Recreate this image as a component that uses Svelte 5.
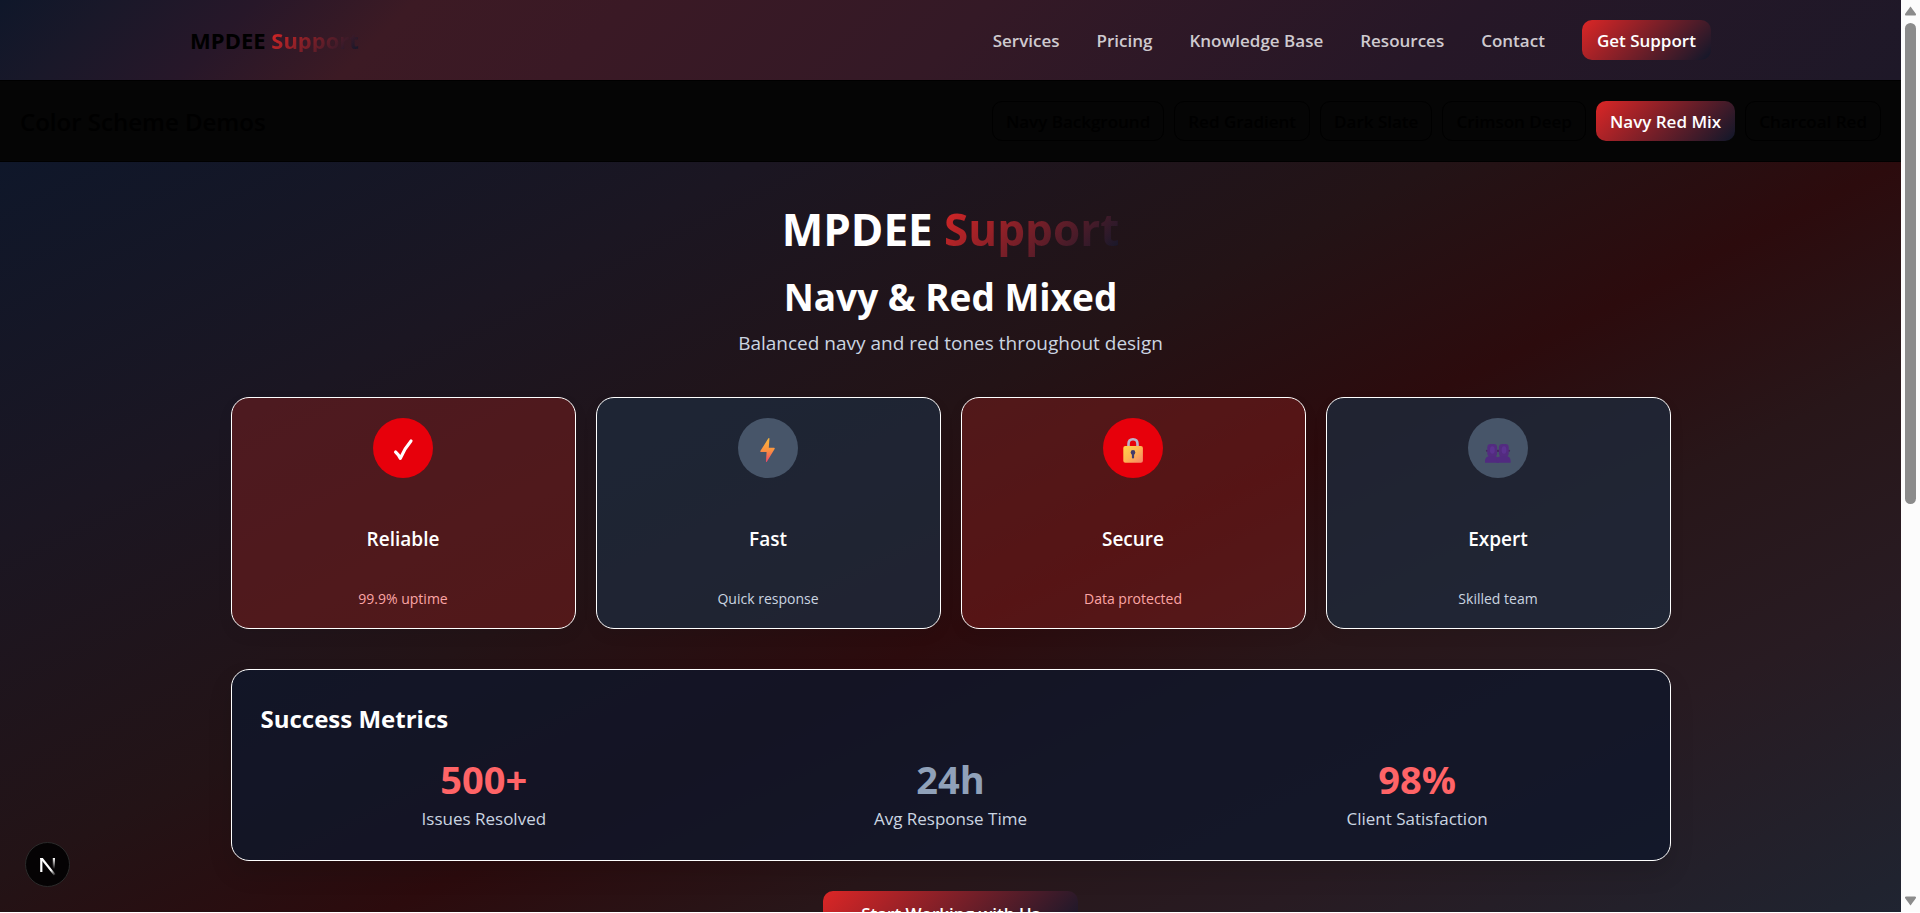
<script>
  const links = ['Services', 'Pricing', 'Knowledge Base', 'Resources', 'Contact'];
  const schemes = ['Navy Background', 'Red Gradient', 'Dark Slate', 'Crimson Deep', 'Navy Red Mix', 'Charcoal Red'];
  let active = $state('Navy Red Mix');

  const features = [
    { icon: 'check', title: 'Reliable', text: '99.9% uptime', tone: 'red' },
    { icon: 'bolt', title: 'Fast', text: 'Quick response', tone: 'navy' },
    { icon: 'lock', title: 'Secure', text: 'Data protected', tone: 'red' },
    { icon: 'people', title: 'Expert', text: 'Skilled team', tone: 'navy' }
  ];

  const metrics = [
    { value: '500+', label: 'Issues Resolved', tone: 'red' },
    { value: '24h', label: 'Avg Response Time', tone: 'slate' },
    { value: '98%', label: 'Client Satisfaction', tone: 'red' }
  ];
</script>

<div class="window">
  <div class="page">
    <header class="top">
      <a class="logo" href="#home">MPDEE <span class="fade">Support</span></a>
      <nav>
        {#each links as link}
          <a href="#{link}">{link}</a>
        {/each}
        <button class="cta">Get Support</button>
      </nav>
    </header>

    <div class="demos">
      <h2>Color Scheme Demos</h2>
      <div class="tabs">
        {#each schemes as scheme}
          <button class:active={scheme === active} onclick={() => (active = scheme)}>{scheme}</button>
        {/each}
      </div>
    </div>

    <main>
      <h1>MPDEE <span class="fade">Support</span></h1>
      <h2 class="scheme">Navy &amp; Red Mixed</h2>
      <p class="lead">Balanced navy and red tones throughout design</p>

      <section class="cards">
        {#each features as f}
          <article class={f.tone}>
            <div class="circle">
              <svg viewBox="0 0 60 60" width="60" height="60" aria-hidden="true">
                {#if f.icon === 'check'}
                  <path d="M22.6 34 Q25.4 36.4 27.3 40.4 Q31.4 30.6 38 23" fill="none" stroke="#fff" stroke-width="3.2" stroke-linecap="round" stroke-linejoin="round" />
                {:else if f.icon === 'bolt'}
                  <defs>
                    <linearGradient id="bolt" x1="0" y1="0" x2="0" y2="1">
                      <stop offset="0" stop-color="#f9b73e" />
                      <stop offset="0.5" stop-color="#fb923f" />
                      <stop offset="1" stop-color="#ee4668" />
                    </linearGradient>
                  </defs>
                  <path d="M30.2 20.4 Q31.6 19.4 31.4 21 L30.8 29.8 H36 Q37.2 29.8 36.6 31 L29 43.6 Q28 44.8 28 43.2 L28.6 34 H23.2 Q22 34 22.5 32.8 Z" fill="url(#bolt)" />
                {:else if f.icon === 'lock'}
                  <defs>
                    <linearGradient id="lock" x1="0" y1="0" x2="1" y2="1">
                      <stop offset="0" stop-color="#ffd34a" />
                      <stop offset="0.5" stop-color="#fdb452" />
                      <stop offset="1" stop-color="#f6826a" />
                    </linearGradient>
                  </defs>
                  <path d="M25.5 30 V26 Q25.5 21.3 30 21.3 Q34.5 21.3 34.5 26 V30" fill="none" stroke="#b9b2c9" stroke-width="2.6" />
                  <rect x="20.3" y="28" width="19.6" height="16.8" rx="2" fill="url(#lock)" />
                  <circle cx="30" cy="34.4" r="2.3" fill="#433b6b" />
                  <rect x="28.9" y="34.6" width="2.2" height="6" rx="1.1" fill="#433b6b" />
                {:else}
                  {#each [0, 11.6] as dx}
                    <g transform="translate({dx} 0)">
                      <path d="M17 44.8 V43 Q17.2 38.4 21.6 38 H26.6 Q31 38.4 31 43 V44.8 Z" fill="#512a80" />
                      <circle cx="19" cy="32.8" r="1.1" fill="#46285f" />
                      <circle cx="29.4" cy="32.8" r="1.1" fill="#46285f" />
                      <rect x="19.3" y="26" width="9.8" height="12.6" rx="3.4" fill="#532b80" />
                      <ellipse cx="24.4" cy="32" rx="2.4" ry="3.8" fill="#5c3290" />
                    </g>
                  {/each}
                {/if}
              </svg>
            </div>
            <h3>{f.title}</h3>
            <p>{f.text}</p>
          </article>
        {/each}
      </section>

      <section class="metrics">
        <h2>Success Metrics</h2>
        <div class="grid">
          {#each metrics as m}
            <div class="metric">
              <strong class={m.tone}>{m.value}</strong>
              <span>{m.label}</span>
            </div>
          {/each}
        </div>
      </section>

      <button class="cta start">Start Working with Us</button>
    </main>
  </div>

  <div class="scroll" aria-hidden="true">
    <svg width="13" height="10" viewBox="0 0 13 10"><path d="M6.5 0.5 L12 8 Q12.4 9.5 11 9.5 H2 Q0.6 9.5 1 8 Z" fill="#8b8b8b" /></svg>
    <div class="track"><div class="thumb"></div></div>
    <svg width="13" height="10" viewBox="0 0 13 10"><path d="M6.5 9.5 L12 2 Q12.4 0.5 11 0.5 H2 Q0.6 0.5 1 2 Z" fill="#8b8b8b" /></svg>
  </div>

  <button class="badge" aria-label="Open developer tools">
    <svg width="44" height="44" viewBox="0 0 44 44" aria-hidden="true">
      <defs>
        <linearGradient id="stem" x1="0" y1="0" x2="0" y2="1">
          <stop offset="0" stop-color="#fff" />
          <stop offset="1" stop-color="#fff" stop-opacity="0" />
        </linearGradient>
        <linearGradient id="diag" x1="0" y1="0" x2="1" y2="1">
          <stop offset="0.7" stop-color="#fff" />
          <stop offset="1" stop-color="#fff" stop-opacity="0" />
        </linearGradient>
      </defs>
      <rect x="14.2" y="15" width="2.2" height="14" fill="#fff" />
      <path d="M14.2 15 H16.8 L29.6 31.2 L27.9 32.4 L14.2 15.6 Z" fill="url(#diag)" />
      <rect x="26.8" y="15" width="2.2" height="11" fill="url(#stem)" />
    </svg>
  </button>
</div>

<style>
  :global(body) {
    background: #fff;
  }

  .window {
    display: flex;
    height: calc(100vh - 1px);
    overflow: hidden;
    font-family: 'Open Sans', 'Noto Sans', sans-serif;
    font-size: 17px;
    line-height: 24px;
    color: #fff;
  }

  .page {
    flex: 1;
    min-width: 0;
    overflow: hidden;
    display: flex;
    flex-direction: column;
  }

  h1, h2, h3, p {
    margin: 0;
  }

  a {
    color: inherit;
    text-decoration: none;
  }

  button {
    font: inherit;
    font-weight: 600;
    cursor: pointer;
  }

  .top {
    display: flex;
    align-items: center;
    justify-content: space-between;
    flex: none;
    height: 80px;
    padding: 0 10%;
    border-bottom: 1px solid #000;
    background: linear-gradient(135deg, #0f172a 0%, #1a1829 6%, #271729 13%, #3c1a24 21%, #3a1925 32%, #341926 50%, #261727 75%, #1e1828 100%);
  }

  .logo {
    color: #000;
    font-size: 22px;
    font-weight: 700;
  }

  .fade {
    display: inline-block;
    background: linear-gradient(135deg, #dc2626, #0f172a);
    background-clip: text;
    -webkit-background-clip: text;
    color: transparent;
  }

  nav {
    display: flex;
    align-items: center;
    gap: 37px;
    color: #cfcacf;
    font-weight: 600;
  }

  nav a {
    padding-top: 2px;
  }

  .cta {
    padding: 9px 15px 7px;
    border: 0;
    border-radius: 10px;
    background: linear-gradient(135deg, #dc2626, #0f172a);
    color: #fff;
  }

  .demos {
    display: flex;
    align-items: center;
    justify-content: space-between;
    flex: none;
    padding: 20px;
    border-bottom: 1px solid #000;
    background: #050505;
    color: #000;
  }

  .demos h2 {
    padding-top: 2px;
    font-size: 24px;
    font-weight: 600;
  }

  .tabs {
    display: flex;
    gap: 10px;
  }

  .tabs button {
    padding: 8px 13px 6px;
    border: 1px solid #000;
    border-radius: 10px;
    background: transparent;
    color: #000;
  }

  .tabs .active {
    padding: 9px 14px 7px;
    border: 0;
    background: linear-gradient(135deg, #dc2626, #0f172a);
    color: #fff;
  }

  main {
    display: flex;
    flex-direction: column;
    align-items: center;
    flex: none;
    min-height: 940px;
    box-sizing: border-box;
    padding: 39px 20px;
    background: linear-gradient(to bottom right, #0f172a, #1b1622 20%, #231316 38%, #2c0b0d 50%, #281619 61%, #281b22 73%, #20232f 88%, #1e293b);
  }

  h1 {
    font-size: 44px;
    line-height: 56px;
    font-weight: 700;
  }

  .scheme {
    margin-top: 16px;
    font-size: 37px;
    line-height: 48px;
    font-weight: 700;
  }

  .lead {
    margin-top: 8px;
    font-size: 19px;
    line-height: 28px;
    color: #cbd5e1;
  }

  .cards,
  .metrics {
    width: 100%;
    max-width: 1440px;
    box-sizing: border-box;
  }

  .cards {
    display: grid;
    grid-template-columns: repeat(4, 1fr);
    gap: 20px;
    margin-top: 40px;
  }

  article {
    display: flex;
    flex-direction: column;
    align-items: center;
    padding: 20px 20px 19px;
    border: 1px solid #fff;
    border-radius: 18px;
    box-shadow: 0 6px 16px rgba(0, 0, 0, 0.06);
  }

  article.red {
    background: rgba(127, 29, 29, 0.5);
  }

  article.navy {
    background: rgba(30, 41, 59, 0.8);
  }

  .circle {
    width: 60px;
    height: 60px;
    border-radius: 50%;
    background: #475569;
  }

  .red .circle {
    background: #e7000b;
  }

  .circle svg {
    display: block;
  }

  h3 {
    margin-top: 47px;
    font-size: 19px;
    line-height: 28px;
    font-weight: 600;
  }

  article p {
    margin-top: 36px;
    font-size: 14px;
    line-height: 20px;
    color: #cbd5e1;
  }

  article.red p {
    color: #fca5a5;
  }

  .metrics {
    margin-top: 40px;
    padding: 31px 29px 27px;
    border: 1px solid #fff;
    border-radius: 18px;
    background: rgba(15, 23, 42, 0.8);
    box-shadow: 0 12px 24px rgba(0, 0, 0, 0.12);
  }

  .metrics h2 {
    font-size: 24px;
    line-height: 36px;
    font-weight: 700;
  }

  .grid {
    display: grid;
    grid-template-columns: repeat(3, 1fr);
    gap: 20px;
    margin-top: 18px;
  }

  .metric {
    display: flex;
    flex-direction: column;
    align-items: center;
    gap: 2px;
    color: #cbd5e1;
  }

  .metric strong {
    font-size: 38px;
    line-height: 48px;
    font-weight: 700;
  }

  .metric span {
    line-height: 28px;
  }

  .metric .red {
    color: #ff6467;
  }

  .metric .slate {
    color: #90a1b9;
  }

  .start {
    margin-top: 30px;
    padding: 11px 38px;
  }

  .scroll {
    display: flex;
    flex-direction: column;
    align-items: center;
    width: 19px;
    padding: 6px 0;
    box-sizing: border-box;
    background: #fcfcfc;
  }

  .track {
    flex: 1;
    padding: 7px 0;
  }

  .thumb {
    width: 11px;
    height: 55.5%;
    border-radius: 6px;
    background: #8b8b8b;
  }

  .badge {
    position: fixed;
    left: 25px;
    bottom: 26px;
    width: 45px;
    height: 45px;
    padding: 0;
    border: 1px solid #2b2b2b;
    border-radius: 50%;
    background: #050304;
    display: grid;
    place-items: center;
  }
</style>
